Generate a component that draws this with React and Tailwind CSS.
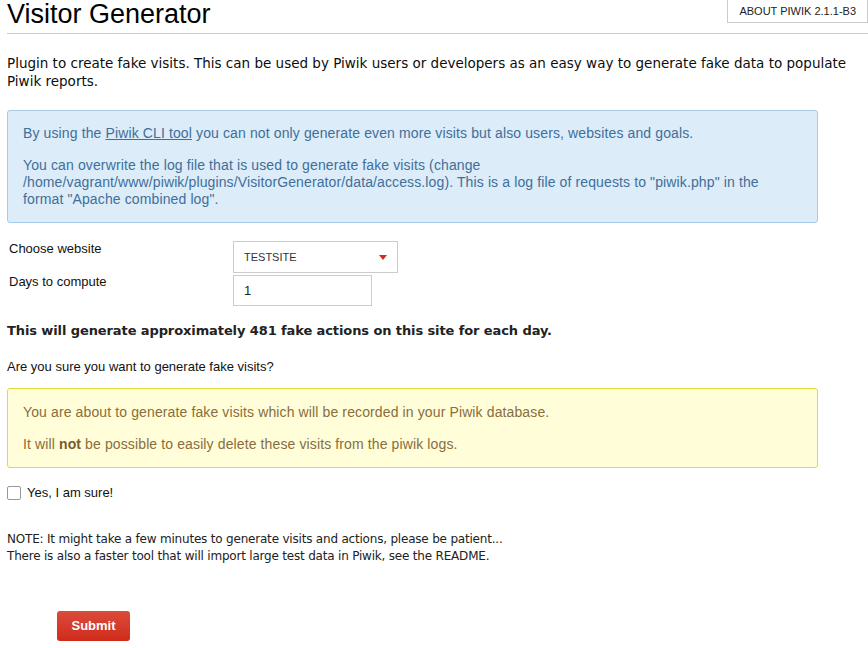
export default function App() {
  return (
    <div className="relative h-[648px] w-[868px] overflow-hidden bg-white font-['DejaVu_Sans',sans-serif] text-[13px] text-[#0d0d0d]">
      <div className="absolute right-0 top-0 border border-t-0 border-[#ccc] bg-white px-[11px] py-[4px] font-['Liberation_Sans',sans-serif] text-[11px] leading-[14px] text-[#222]">
        ABOUT PIWIK 2.1.1-B3
      </div>

      <div className="pl-[7px]">
        <h2 className="border-b border-[#ccc] pb-[4px] font-['Liberation_Sans',sans-serif] text-[27px] leading-[29px] text-black">
          Visitor Generator
        </h2>

        <p className="mt-[20px] pr-[8px] text-[13.5px] leading-[18px]">
          Plugin to create fake visits. This can be used by Piwik users or developers as an easy way to generate fake data to populate Piwik reports.
        </p>

        <div className="mt-[20px] w-[811px] rounded-[3px] border border-[#a6cbe8] bg-[#dcecf9] px-[15px] pb-[14px] pt-[14px] font-['Liberation_Sans',sans-serif] text-[14px] leading-[17px] tracking-[0.12px] text-[#3f6f9a]">
          <p>
            By using the <span className="underline">Piwik CLI tool</span> you can not only generate even more visits but also users, websites and goals.
          </p>
          <p className="mt-[15px]">
            You can overwrite the log file that is used to generate fake visits (change
            <br />
            /home/vagrant/www/piwik/plugins/VisitorGenerator/data/access.log). This is a log file of requests to "piwik.php" in the
            <br />
            format "Apache combined log".
          </p>
        </div>

        <div className="mt-[18px] font-['Liberation_Sans',sans-serif] text-[13px] text-[#111]">
          <div className="flex items-start">
            <label className="w-[226px] pl-[2px] leading-[16px]">Choose website</label>
            <div className="flex h-[32px] w-[165px] items-center justify-between border border-[#ccc] bg-white pl-[10px] pr-[10px]">
              <span className="text-[11px] text-[#333]">TESTSITE</span>
              <span className="h-0 w-0 border-x-[4px] border-t-[5px] border-x-transparent border-t-[#d4291f]" />
            </div>
          </div>
          <div className="mt-[2px] flex items-start">
            <label className="-mt-[1px] w-[226px] pl-[2px] leading-[16px]">Days to compute</label>
            <div className="flex h-[31px] w-[139px] items-center border border-[#ccc] bg-white pl-[10px] text-[13px] text-[#222]">
              1
            </div>
          </div>
        </div>

        <p className="mt-[16px] text-[13px] font-bold leading-[18px] tracking-[-0.1px] text-[#222]">
          This will generate approximately 481 fake actions on this site for each day.
        </p>

        <p className="mt-[19px] font-['Liberation_Sans',sans-serif] text-[13px] leading-[16px] text-[#111]">
          Are you sure you want to generate fake visits?
        </p>

        <div className="mt-[13px] w-[811px] rounded-[3px] border border-[#e3d93a] bg-[#fffed9] px-[15px] pb-[14px] pt-[15px] font-['Liberation_Sans',sans-serif] text-[14px] leading-[17px] tracking-[0.12px] text-[#8a6d3b]">
          <p>You are about to generate fake visits which will be recorded in your Piwik database.</p>
          <p className="mt-[15px]">
            It will <b className="text-[#7a5d2b]">not</b> be possible to easily delete these visits from the piwik logs.
          </p>
        </div>

        <div className="mt-[15px] flex items-center font-['Liberation_Sans',sans-serif] text-[13px] text-[#111]">
          <span className="h-[14px] w-[14px] rounded-[2px] border border-[#999] bg-white" />
          <span className="ml-[6px]">Yes, I am sure!</span>
        </div>

        <p className="mt-[28px] text-[12px] leading-[17px] tracking-[-0.2px] text-[#222]">
          NOTE: It might take a few minutes to generate visits and actions, please be patient...
          <br />
          There is also a faster tool that will import large test data in Piwik, see the README.
        </p>

        <button className="ml-[50px] mt-[46px] h-[30px] w-[73px] rounded-[3px] bg-gradient-to-b from-[#db4a3a] to-[#d02a1a] font-['Liberation_Sans',sans-serif] text-[13px] font-bold text-white">
          Submit
        </button>
      </div>
    </div>
  );
}
